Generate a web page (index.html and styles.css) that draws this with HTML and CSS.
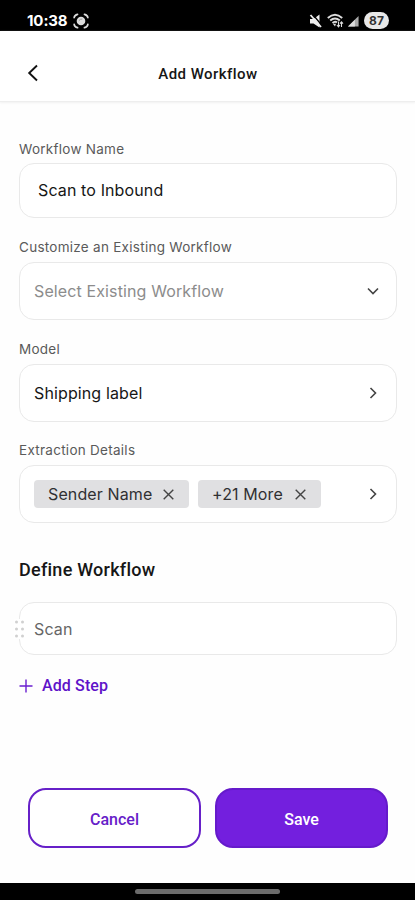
FILE: index.html
```html
<!DOCTYPE html>
<html lang="en">
<head>
<meta charset="utf-8">
<meta name="viewport" content="width=device-width, initial-scale=1">
<title>Add Workflow</title>
<link rel="stylesheet" href="styles.css">
</head>
<body>
<div class="statusbar">
  <span class="time">10:38</span>
  <svg class="capture" width="16" height="16" viewBox="0 0 16 16" fill="none" stroke="#ddd" stroke-width="1.8" stroke-linecap="round"><path d="M1.200 4.500Q1.500 2 4.500 1.300M11.500 1.300Q14.500 2 14.800 4.500M1.200 11.500Q1.500 14 4.500 14.700M11.500 14.700Q14.500 14 14.800 11.500"/><circle cx="8" cy="8" r="4.300" fill="#ddd" stroke="none"/><path d="M6 7.500Q7 5.800 9 6" stroke="#999" stroke-width="1"/></svg>
  <span class="spacer"></span>
  <svg class="mute" width="13" height="14" viewBox="0 0 13 14"><path d="M1 5h3.500l6-4.500v13L4.500 9.500H1z" fill="#eee"/><path d="M3.500 0l9 11" stroke="#000" stroke-width="1.300"/><path d="M1.500 1l10.500 12" stroke="#eee" stroke-width="1.800"/></svg>
  <svg class="wifi" width="17" height="15" viewBox="0 0 17 15" fill="none" stroke="#ddd" stroke-width="1.900"><path d="M.8 5Q8 -1.500 15.200 5M3.200 7.500Q8 3.300 12.800 7.500M5.500 10Q8 7.800 10 9.500"/><path d="M8 13.500L5.800 10.800H9z" fill="#ddd" stroke="none"/><path d="M11.500 8.500v5M9.900 12l1.600 1.800 1.400-1.800M14.500 14V9M13 10.600l1.500-1.800 1.500 1.800" stroke-width="1.100"/></svg>
  <svg class="signal" width="11" height="12" viewBox="0 0 12 12"><path d="M0 12L11.500.5V12z" fill="#aaa"/><path d="M0 12L7.500 4.500V12z" fill="#ddd"/></svg>
  <span class="battery">87</span>
</div>
<header class="header">
  <svg class="back" width="12" height="18" viewBox="0 0 12 18" fill="none" stroke="#111" stroke-width="1.900"><path d="M10 1.500L2.200 9l7.800 7.500"/></svg>
  <h1>Add Workflow</h1>
</header>
<main class="form">
  <label>Workflow Name</label>
  <div class="field name"><span>Scan to Inbound</span></div>
  <label>Customize an Existing Workflow</label>
  <div class="field select"><span class="placeholder">Select Existing Workflow</span><svg class="chev" width="14" height="14" viewBox="0 0 14 14"><path d="M2 4.500l5 5 5-5"/></svg></div>
  <label>Model</label>
  <div class="field"><span>Shipping label</span><svg class="chev" width="14" height="14" viewBox="0 0 14 14"><path d="M4.500 2l5 5-5 5"/></svg></div>
  <label>Extraction Details</label>
  <div class="field">
    <div class="chip sender"><span>Sender Name</span><svg width="11" height="11" viewBox="0 0 11 11"><path d="M.7.700l9.600 9.600M10.300.700L.7 10.300"/></svg></div>
    <div class="chip more"><span>+21 More</span><svg width="11" height="11" viewBox="0 0 11 11"><path d="M.7.700l9.600 9.600M10.300.700L.7 10.300"/></svg></div>
    <svg class="chev" width="14" height="14" viewBox="0 0 14 14"><path d="M4.500 2l5 5-5 5"/></svg>
  </div>
  <h2>Define Workflow</h2>
  <div class="field step"><svg class="grip" width="12" height="20" viewBox="0 0 12 20"><path fill="#fff" d="M0 0h12v20H0z"/><g fill="#d0d0d0"><circle cx="2.500" cy="3" r="1.500"/><circle cx="8.500" cy="3" r="1.500"/><circle cx="2.500" cy="10" r="1.500"/><circle cx="8.500" cy="10" r="1.500"/><circle cx="2.500" cy="17" r="1.500"/><circle cx="8.500" cy="17" r="1.500"/></g></svg><span>Scan</span></div>
  <div class="add"><svg width="14" height="14" viewBox="0 0 14 14" fill="none" stroke="#6a1fd0" stroke-width="1.400"><path d="M7 .5v13M.5 7h13"/></svg><span>Add Step</span></div>
</main>
<footer class="actions">
  <button class="cancel">Cancel</button>
  <button class="save">Save</button>
</footer>
<div class="navbar"><div class="handle"></div></div>
</body>
</html>
```
FILE: styles.css
```css
* { box-sizing: border-box; }
body {
  margin: 0;
  height: 900px;
  display: flex;
  flex-direction: column;
  background: #fefefe;
  color: #161616;
  font-family: Inter, sans-serif;
  overflow: hidden;
}
svg { display: block; flex: none; }
.statusbar {
  height: 31px;
  background: #000;
  color: #fff;
  display: flex;
  align-items: center;
  padding: 10px 26px 0 27px;
  flex: none;
}
.time { font-size: 15px; line-height: 20px; font-weight: 700; letter-spacing: -0.1px; }
.capture { margin-left: 5px; }
.spacer { flex: 1; }
.mute { margin-right: 5px; }
.wifi { margin-right: 4px; }
.signal { margin-right: 5px; }
.battery {
  width: 25px;
  height: 17px;
  border-radius: 9px;
  background: #e8e8e8;
  color: #333;
  font-size: 12px;
  font-weight: 700;
  line-height: 17px;
  text-align: center;
}
.header {
  height: 71px;
  flex: none;
  background: #fff;
  border-bottom: 1px solid #eee;
  box-shadow: 0 1px 2px #f1f1f1;
  display: grid;
  grid-template-columns: 46px 1fr 46px;
  align-items: center;
  padding-top: 14px;
}
.back { margin-left: 27px; }
h1 {
  margin: 2px 0 0 1px;
  text-align: center;
  font: 500 15px/20px Roboto, sans-serif;
  letter-spacing: 0.45px;
}
.form { padding: 37px 18px 0 19px; flex: 1; }
label {
  display: block;
  height: 20px;
  line-height: 20px;
  font-size: 13.500px;
  color: #5a5a5a;
  letter-spacing: 0.27px;
  margin-bottom: 5px;
}
label:first-child { margin-bottom: 4px; }
.field {
  height: 58px;
  border: 1.500px solid #e9e9e9;
  border-radius: 15px;
  background: #fff;
  display: flex;
  align-items: center;
  padding: 0 16px 0 14px;
  font-size: 16px;
  line-height: 20px;
  letter-spacing: 0.12px;
  margin-bottom: 18px;
  position: relative;
}
.field.name { height: 55px; padding: 0 16px 2px 18px; margin-bottom: 19px; }
.field.select { margin-bottom: 19px; }
.placeholder { color: #8c8c8c; }
.chev { margin-left: auto; fill: none; stroke: #444; stroke-width: 1.600; }
.chip {
  height: 28px;
  border-radius: 4px;
  background: #e0e0e2;
  color: #303032;
  display: flex;
  align-items: center;
  justify-content: space-between;
  padding: 0 15px 0 14px;
}
.chip svg { fill: none; stroke: #444; stroke-width: 1.400; }
.sender { width: 155px; margin-right: 9px; }
.more { width: 123px; }
h2 {
  margin: 36px 0 21px;
  font: 500 18px/22px Roboto, sans-serif;
  letter-spacing: 0.26px;
}
.field.step { height: 53px; color: #666; margin-bottom: 21px; }
.grip { position: absolute; left: -6px; top: 16px; }
.add {
  display: flex;
  align-items: center;
  gap: 9px;
  color: #5e12c9;
  font: 500 16px/20px Roboto, sans-serif;
  letter-spacing: 0.12px;
}
.actions { display: flex; gap: 14px; padding: 0 27px 35px 28px; flex: none; }
button {
  flex: 1;
  height: 60px;
  border-radius: 18px;
  border: 2px solid #6620c8;
  font: 500 16px/20px Roboto, sans-serif;
  padding: 3px 0 0;
}
.cancel { background: #fff; color: #6620c8; }
.save { background: #731fde; border-color: #651acb; color: #fff; }
.navbar {
  height: 17px;
  flex: none;
  background: #000;
  display: flex;
  justify-content: center;
  align-items: center;
}
.handle { width: 145px; height: 5px; border-radius: 3px; background: #6b6b6b; }
```
